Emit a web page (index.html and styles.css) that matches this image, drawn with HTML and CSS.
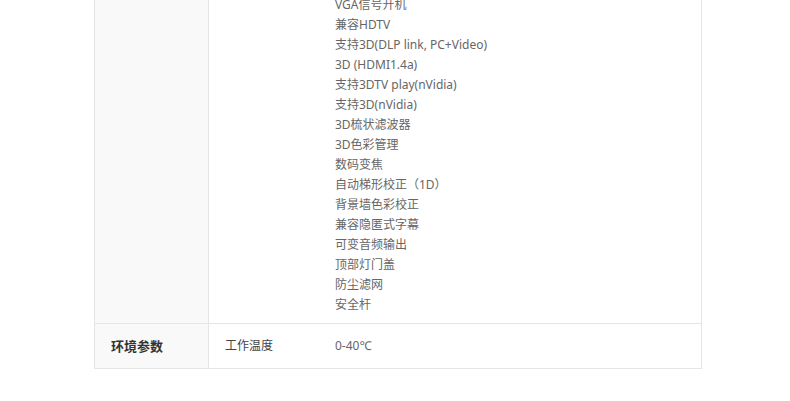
FILE: index.html
```html
<!DOCTYPE html>
<html lang="zh-CN">
<head>
    <meta charset="UTF-8">
    <title>产品参数</title>
    <link rel="stylesheet" href="styles.css">
</head>
<body>
    <div class="params">
        <table class="param-table">
            <tr>
                <th class="group"></th>
                <td class="name"></td>
                <td class="value">
                    <ul class="feature-list">
                        <li>VGA信号开机</li>
                        <li>兼容HDTV</li>
                        <li>支持3D(DLP link, PC+Video)</li>
                        <li>3D (HDMI1.4a)</li>
                        <li>支持3DTV play(nVidia)</li>
                        <li>支持3D(nVidia)</li>
                        <li>3D梳状滤波器</li>
                        <li>3D色彩管理</li>
                        <li>数码变焦</li>
                        <li>自动梯形校正（1D）</li>
                        <li>背景墙色彩校正</li>
                        <li>兼容隐匿式字幕</li>
                        <li>可变音频输出</li>
                        <li>顶部灯门盖</li>
                        <li>防尘滤网</li>
                        <li>安全杆</li>
                    </ul>
                </td>
            </tr>
            <tr class="short-row">
                <th class="group">环境参数</th>
                <td class="name">工作温度</td>
                <td class="value">0-40℃</td>
            </tr>
        </table>
    </div>
</body>
</html>
```

FILE: styles.css
```css
body {
    margin: 0;
    background: #fff;
    font-family: "Noto Sans", "Noto Sans CJK SC", sans-serif;
    font-size: 12px;
    color: #666;
}
.params {
    margin: -16px 0 0 94px;
    width: 608px;
}
.param-table {
    width: 100%;
    border-collapse: collapse;
    border: 1px solid #e5e5e5;
    table-layout: fixed;
}
.param-table th,
.param-table td {
    border-top: 1px solid #e5e5e5;
    padding: 0 0 0 16px;
    text-align: left;
    vertical-align: middle;
    line-height: 20px;
}
.group {
    width: 97px;
    background: #f9f9f9;
    border-right: 1px solid #e5e5e5;
    font-weight: bold;
    color: #333;
    font-size: 13px;
}
.name {
    width: 94px;
    color: #444;
}
.value {
    color: #666;
}
.feature-list {
    list-style: none;
    margin: 0;
    padding: 10px 0 8px;
}
.short-row th,
.short-row td {
    height: 44px;
}
```
